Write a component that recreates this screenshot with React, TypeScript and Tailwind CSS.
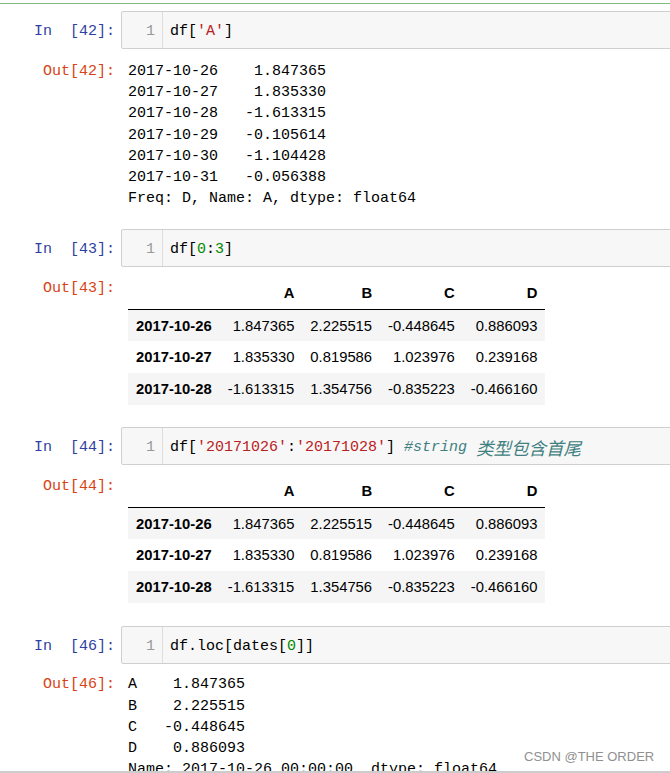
import React from "react";

const MONO = "font-['Liberation_Mono','Noto_Sans_CJK_SC',monospace] text-[15px]";

function InCell({ n, children }: { n: number; children: React.ReactNode }) {
  return (
    <div className="flex">
      <div className="w-[115px] h-[38px] pt-[4px] flex items-center justify-end whitespace-pre text-[#303f9f]">{`In  [${n}]:`}</div>
      <div className="ml-[6px] -mr-[20px] flex-1 h-[38px] flex border border-[#cfcfcf] rounded-[2px] bg-[#f7f7f7]">
        <div className="w-[41px] border-r border-[#dddddd] pt-[4px] flex items-center justify-end pr-[7px] text-[#999999]">1</div>
        <div className="pl-[7px] pt-[4px] flex items-center whitespace-pre text-black">{children}</div>
      </div>
    </div>
  );
}

function OutText({ n, lines, pt }: { n: number; lines: string[]; pt: string }) {
  return (
    <div className="flex mt-[8px]">
      <div className={`w-[115px] text-right text-[#d84315] leading-[21.2px] ${pt} whitespace-pre`}>{`Out[${n}]:`}</div>
      <div className={`ml-[13px] ${pt} leading-[21.2px] text-black`}>
        {lines.map((l, i) => (
          <div key={i} className="whitespace-pre">{l}</div>
        ))}
      </div>
    </div>
  );
}

const rows = [
  ["2017-10-26", "1.847365", "2.225515", "-0.448645", "0.886093"],
  ["2017-10-27", "1.835330", "0.819586", "1.023976", "0.239168"],
  ["2017-10-28", "-1.613315", "1.354756", "-0.835223", "-0.466160"],
];

function OutTable({ n }: { n: number }) {
  return (
    <div className="flex mt-[10px]">
      <div className="w-[115px] text-right text-[#d84315] leading-[21px] pt-[1px] whitespace-pre">{`Out[${n}]:`}</div>
      <div className="ml-[13px]">
        <table className="border-collapse font-['Liberation_Sans',Arial,sans-serif] text-[14.8px] text-black">
          <thead>
            <tr className="border-b border-black">
              <th className="h-[32px] px-2"></th>
              {["A", "B", "C", "D"].map((h) => (
                <th key={h} className="h-[32px] px-2 text-right font-bold">{h}</th>
              ))}
            </tr>
          </thead>
          <tbody>
            {rows.map((r, i) => (
              <tr key={i} className={i % 2 === 0 ? "bg-[#f5f5f5]" : "bg-white"}>
                <th className="h-[32px] px-2 text-right font-bold">{r[0]}</th>
                {r.slice(1).map((v, j) => (
                  <td key={j} className="h-[32px] px-2 text-right font-normal">{v}</td>
                ))}
              </tr>
            ))}
          </tbody>
        </table>
      </div>
    </div>
  );
}

export default function App() {
  const str = "text-[#ba2121]";
  const num = "text-[#008800]";
  return (
    <div className={`relative w-[670px] h-[773px] overflow-hidden bg-white ${MONO}`}>
      <div className="h-[3px]"></div>
      <div className="h-px bg-[#7dba7d]"></div>
      <div className="mt-[7px]">
        <InCell n={42}>
          <span>df[</span>
          <span className={str}>'A'</span>
          <span>]</span>
        </InCell>
        <OutText
          n={42}
          pt="pt-[4px]"
          lines={[
            "2017-10-26    1.847365",
            "2017-10-27    1.835330",
            "2017-10-28   -1.613315",
            "2017-10-29   -0.105614",
            "2017-10-30   -1.104428",
            "2017-10-31   -0.056388",
            "Freq: D, Name: A, dtype: float64",
          ]}
        />
      </div>
      <div className="mt-[20px]">
        <InCell n={43}>
          <span>df[</span>
          <span className={num}>0</span>
          <span>:</span>
          <span className={num}>3</span>
          <span>]</span>
        </InCell>
        <OutTable n={43} />
      </div>
      <div className="mt-[22px]">
        <InCell n={44}>
          <span>df[</span>
          <span className={str}>'20171026'</span>
          <span>:</span>
          <span className={str}>'20171028'</span>
          <span>] </span>
          <span className="italic text-[#408080]">#string </span>
          <span className="italic text-[#408080] font-['Noto_Sans_CJK_SC',sans-serif] text-[17.5px]">类型包含首尾</span>
        </InCell>
        <OutTable n={44} />
      </div>
      <div className="mt-[23px]">
        <InCell n={46}>
          <span>df.loc[dates[</span>
          <span className={num}>0</span>
          <span>]]</span>
        </InCell>
        <OutText
          n={46}
          pt="pt-[2px]"
          lines={[
            "A    1.847365",
            "B    2.225515",
            "C   -0.448645",
            "D    0.886093",
            "Name: 2017-10-26 00:00:00, dtype: float64",
          ]}
        />
      </div>
      <div className="absolute left-[524px] top-[749px] font-['Liberation_Sans',Arial,sans-serif] text-[13px] leading-[16px] text-[#909090]">
        CSDN @THE ORDER
      </div>
      <div className="absolute left-0 right-0 bottom-0 h-[2px] bg-[#cccccc]"></div>
    </div>
  );
}
